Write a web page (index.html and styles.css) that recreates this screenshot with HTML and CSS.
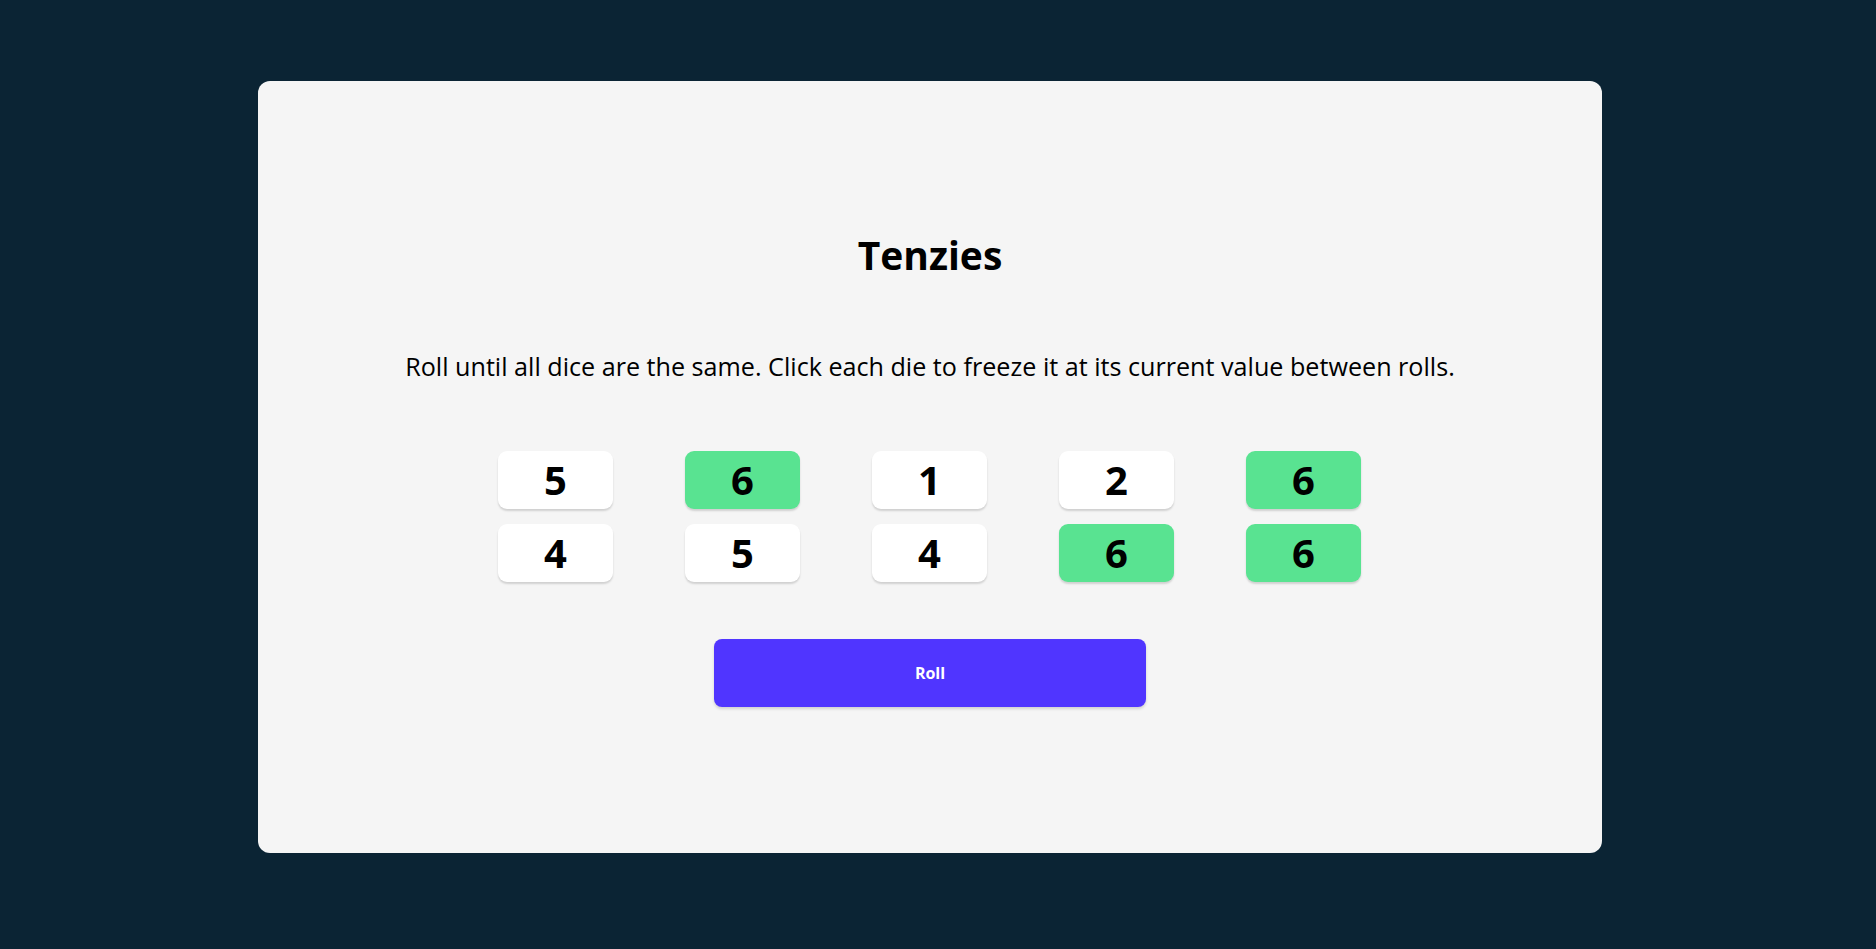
FILE: index.html
```html
<!DOCTYPE html>
<html lang="en">
<head>
<meta charset="utf-8">
<title>Tenzies</title>
<link rel="stylesheet" href="styles.css">
</head>
<body>
<div class="page">
  <main class="card">
    <h1 class="title">Tenzies</h1>
    <p class="instructions">Roll until all dice are the same. Click each die to freeze it at its current value between rolls.</p>
    <div class="dice">
      <button class="die">5</button>
      <button class="die held">6</button>
      <button class="die">1</button>
      <button class="die">2</button>
      <button class="die held">6</button>
      <button class="die">4</button>
      <button class="die">5</button>
      <button class="die">4</button>
      <button class="die held">6</button>
      <button class="die held">6</button>
    </div>
    <button class="roll">Roll</button>
  </main>
</div>
</body>
</html>
```

FILE: styles.css
```css
html, body {
  margin: 0;
  padding: 0;
  background: #0B2434;
  font-family: "Open Sans", "Noto Sans", sans-serif;
}

.page {
  padding: 81px 0 96px 258px;
}

.card {
  box-sizing: border-box;
  width: 1344px;
  height: 772px;
  background: #F5F5F5;
  border-radius: 12px;
  display: flex;
  flex-direction: column;
  align-items: center;
  padding-top: 147px;
}

.title {
  margin: 0;
  font-size: 39px;
  line-height: 54px;
  font-weight: 700;
  color: #000;
}

.instructions {
  margin: 67px 0 0;
  font-size: 25.15px;
  line-height: 34px;
  font-weight: 400;
  color: #000;
  text-align: center;
}

.dice {
  margin-top: 68px;
  margin-right: 1px;
  display: grid;
  grid-template-columns: repeat(5, 115px);
  grid-auto-rows: 58px;
  column-gap: 72px;
  row-gap: 15px;
}

.die {
  border: none;
  border-radius: 9px;
  background: #FFFFFF;
  box-shadow: 0 2px 2px rgba(0, 0, 0, 0.15);
  font-family: "Open Sans", "Noto Sans", sans-serif;
  font-size: 40px;
  font-weight: 700;
  color: #000;
  padding: 0;
  line-height: 1;
  cursor: pointer;
}

.die.held {
  background: #59E391;
}

.roll {
  margin-top: 57px;
  width: 432px;
  height: 68px;
  border: none;
  border-radius: 8px;
  background: #5035FF;
  color: #FFFFFF;
  font-family: "Open Sans", "Noto Sans", sans-serif;
  font-size: 16px;
  font-weight: 700;
  box-shadow: 0 2px 3px rgba(0, 0, 0, 0.15);
  cursor: pointer;
}
```
